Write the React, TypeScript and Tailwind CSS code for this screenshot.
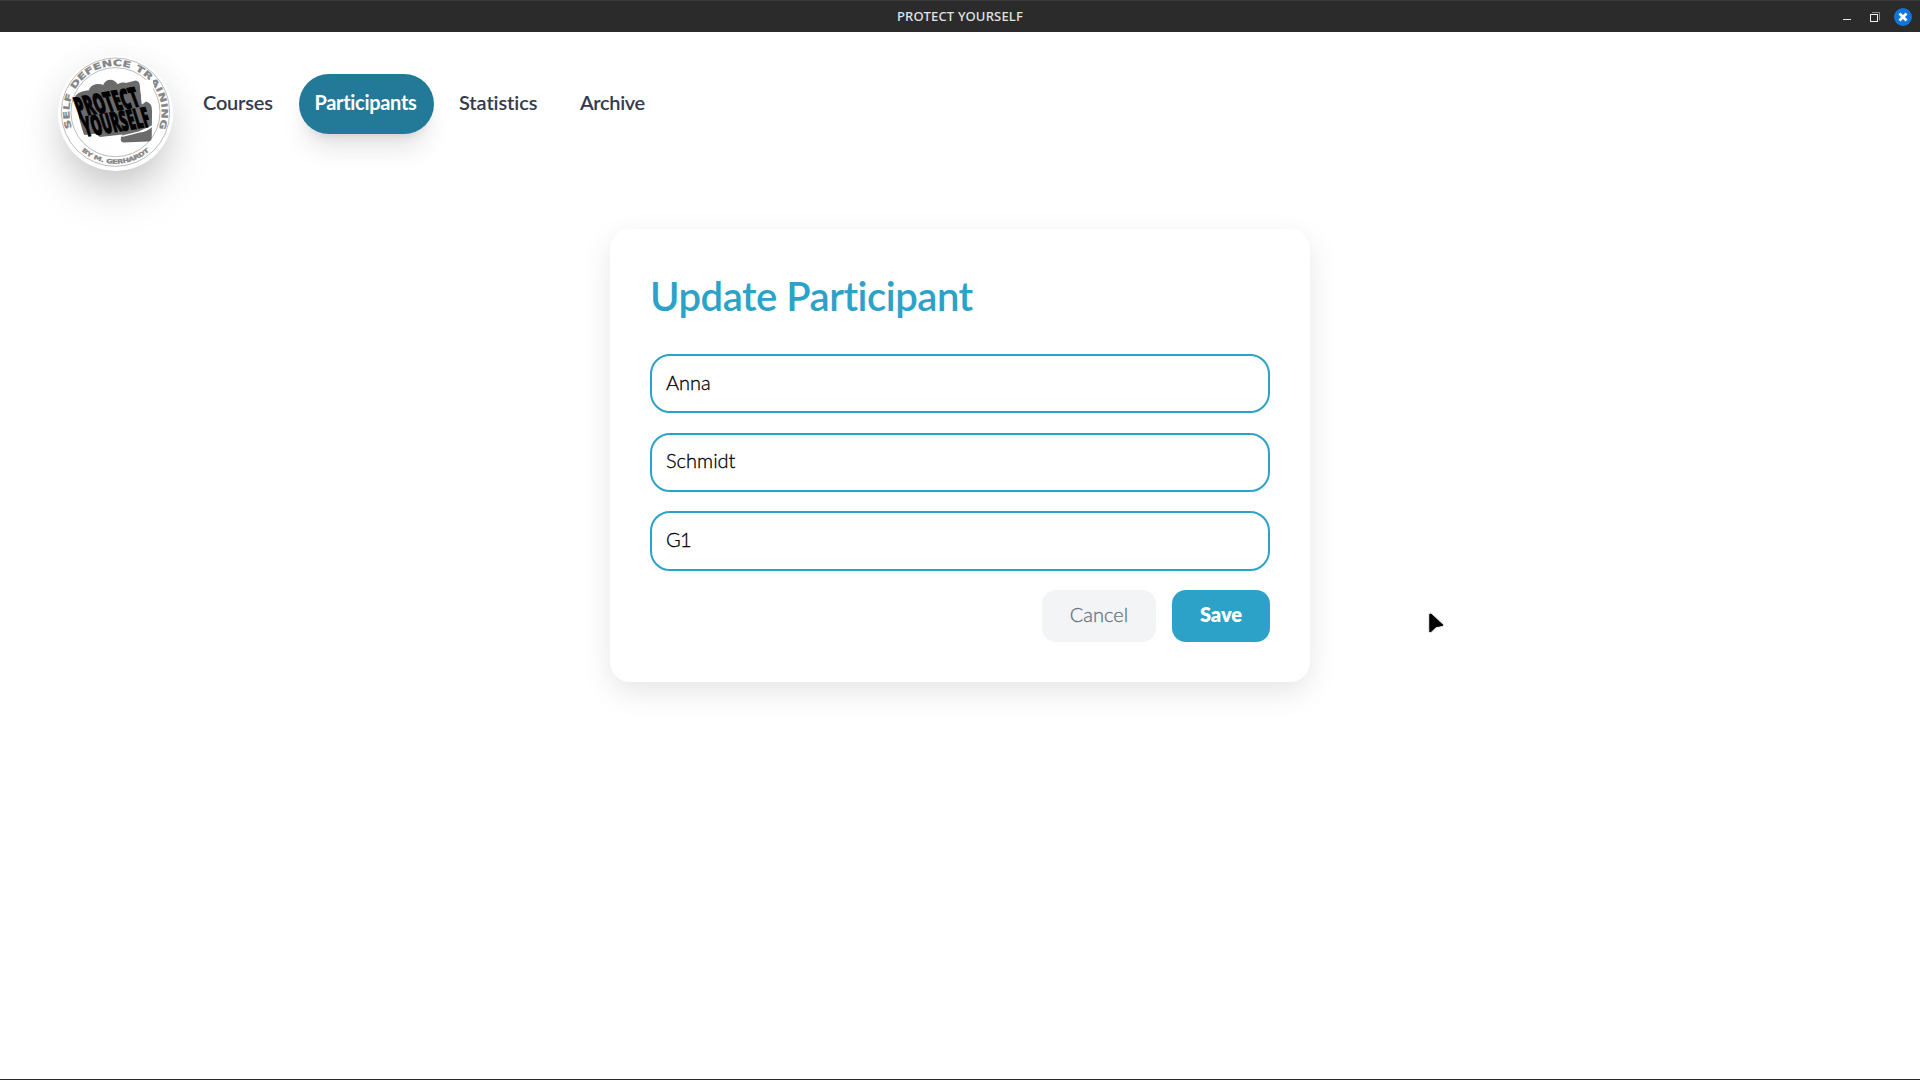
import React from "react";

const LETTER_WIDTHS: Record<string, number> = {
  S: 0.72, E: 0.68, L: 0.64, F: 0.68, D: 0.83, N: 0.84, C: 0.73, T: 0.68, R: 0.77, A: 0.77,
  I: 0.4, G: 0.82, B: 0.76, Y: 0.72, M: 1, H: 0.84, ".": 0.38, " ": 0.4,
};

type RingTextProps = { text: string; radius: number; from: number; to: number; size: number; stretch: number; flip?: boolean };

/* Letters widened along a circle, from one angle to another (degrees from twelve o'clock). */
function RingText({ text, radius, from, to, size, stretch, flip }: RingTextProps) {
  const chars = text.split("");
  const total = chars.reduce((sum, c) => sum + LETTER_WIDTHS[c], 0);
  let run = 0;
  return (
    <g fontSize={size} textAnchor="middle">
      {chars.map((c, i) => {
        const angle = from + ((run + LETTER_WIDTHS[c] / 2) / total) * (to - from);
        run += LETTER_WIDTHS[c];
        return (
          <text key={i} transform={`translate(227 248) rotate(${angle}) translate(0 ${flip ? radius : -radius}) scale(${stretch} 1)`}>
            {c}
          </text>
        );
      })}
    </g>
  );
}

function Logo() {
  return (
    <svg viewBox="54 80 346 344" className="h-[115px] w-[115px] rounded-full bg-white shadow-[0_25px_50px_-12px_rgba(0,0,0,0.25),0_8px_40px_rgba(0,0,0,0.06)]">
      <g fill="none" stroke="#999" strokeWidth="2">
        <circle cx="227" cy="248" r="163" />
        <circle cx="227" cy="248" r="134" />
      </g>
      <g fontFamily="DejaVu Sans, sans-serif" fontWeight="700" fill="#858585" stroke="#858585" strokeWidth="0.800">
        <RingText text="SELF DEFENCE TRAINING" radius={139} from={-110} to={111} size={26} stretch={1.45} />
        <RingText text="BY M. GERHARDT" radius={155} from={41} to={-41} size={18} stretch={1.35} flip />
      </g>
      <path fill="#6b6b6b" d="M105 203 C108 190 130 184 147 182 C152 164 176 160 190 166 C198 145 224 146 233 164 C242 158 252 158 258 160 L288 153 Q298 154 300 166 L307 225 L319 216 Q338 222 337 244 L336 325 Q336 336 324 336 L250 339 Q240 337 244 323 L248 315 L180 323 L170 312 L133 317 Q128 306 118 268 Z" />
      <path fill="#fff" d="M240 320 L296 306 L338 287 L338 292 Q322 308 300 309 L250 322 Z" />
      <path fill="#fff" d="M300 154 L306 224 L320 214 L340 220 L340 150 Z" />
      <g fontFamily="Open Sans, sans-serif" fontWeight="800" fill="#000" stroke="#000" strokeWidth="3">
        <text transform="translate(116 263) rotate(-10) skewX(10)" fontSize="84" textLength="192" lengthAdjust="spacingAndGlyphs">PROTECT</text>
        <text transform="translate(137 322) rotate(-9) skewX(8)" fontSize="84" textLength="201" lengthAdjust="spacingAndGlyphs">YOURSELF</text>
      </g>
    </svg>
  );
}

function TitleBar() {
  return (
    <header className="grid h-8 grid-cols-3 items-center border-t border-[#3a3a3a] bg-[#2b2b2b] font-['Noto_Sans',sans-serif]">
      <span />
      <span className="-mt-0.5 text-center text-[13px] leading-[30px] font-medium tracking-[0.2px] text-[#e2e2e2]">PROTECT YOURSELF</span>
      <div className="flex items-center justify-end">
        <svg viewBox="0 0 78 20" className="h-5 w-[78px]">
          <path d="M1 12.500h8" stroke="#e6e6e6" fill="none" />
          <path d="M30 5.500h7.500v8" stroke="#8d8d8d" fill="none" />
          <rect x="28.500" y="7.500" width="7" height="7" stroke="#f0f0f0" fill="none" />
          <circle cx="61" cy="10" r="9" fill="#1075dd" />
          <path d="M57.500 6.500l7 7M64.500 6.500l-7 7" stroke="#fff" strokeWidth="2.800" />
        </svg>
      </div>
    </header>
  );
}

const inputClass =
  "w-full rounded-[20px] border-2 border-[#2da2c9] bg-white px-3.5 text-xl font-light text-black outline-none [-webkit-text-stroke:0.3px_#000]";

export default function App() {
  return (
    <div className="flex h-screen flex-col overflow-hidden border-b border-[#2b2b2b] bg-white font-['Lato',sans-serif] [font-variant-ligatures:none]">
      <TitleBar />
      <nav className="flex h-[197px] shrink-0 items-start pt-[24px] pl-[58px] text-xl font-semibold text-[#343a4d]">
        <Logo />
        <div className="mt-[18px] ml-[14px] flex h-[60px] items-center gap-[11px]">
          <a className="w-[101px] px-4 pb-1 tracking-[-0.2px]">Courses</a>
          <a className="flex h-[60px] w-[135px] items-center justify-center rounded-[30px] bg-[#227a98] pr-0.5 pb-1 font-bold tracking-[-0.3px] text-white shadow-xl">Participants</a>
          <a className="w-[109px] px-[14px] pb-1 tracking-[-0.1px]">Statistics</a>
          <a className="px-[15px] pb-1 tracking-[-0.35px]">Archive</a>
        </div>
      </nav>
      <main className="flex justify-center">
        <form className="flex h-[453px] w-[700px] flex-col rounded-[20px] bg-white p-10 shadow-[0_10px_30px_rgba(0,0,0,0.1)]">
          <h1 className="mb-[29px] h-14 text-[40px] leading-[55px] font-semibold tracking-[-0.48px] text-[#2da2c9]">Update Participant</h1>
          <div className="flex flex-col">
            <input className={`${inputClass} mb-5 h-[59px] pb-[3px]`} defaultValue="Anna" />
            <input className={`${inputClass} mb-[19px] h-[59px] pb-[5px]`} defaultValue="Schmidt" />
            <input className={`${inputClass} h-[60px] pb-1 tracking-[-0.8px]`} defaultValue="G1" />
          </div>
          <div className="mt-[19px] flex justify-end gap-4 text-xl">
            <button type="button" className="h-[52px] w-[114px] rounded-[14px] bg-[#f2f4f6] pb-1 font-light text-[#6b7280] [-webkit-text-stroke:0.3px_#6b7280]">Cancel</button>
            <button type="button" className="h-[52px] w-[98px] rounded-[14px] bg-[#2da2c9] pb-1 font-extrabold text-white">Save</button>
          </div>
        </form>
      </main>
      <svg viewBox="0 0 20 24" className="absolute top-[611px] left-[1426px] h-6 w-5">
        <path d="M3.500 3.500v17q.5 1 1.500.2l5-4.700 6.500-1.200q1-.6.2-1.400l-11.500-10.300q-1.200-.7-1.700.4z" fill="#000" stroke="#0002" strokeWidth="2.500" />
        <path d="M3.500 3.500v17q.5 1 1.500.2l5-4.700 6.500-1.200q1-.6.2-1.400l-11.500-10.300q-1.200-.7-1.700.4z" fill="#000" />
      </svg>
    </div>
  );
}
